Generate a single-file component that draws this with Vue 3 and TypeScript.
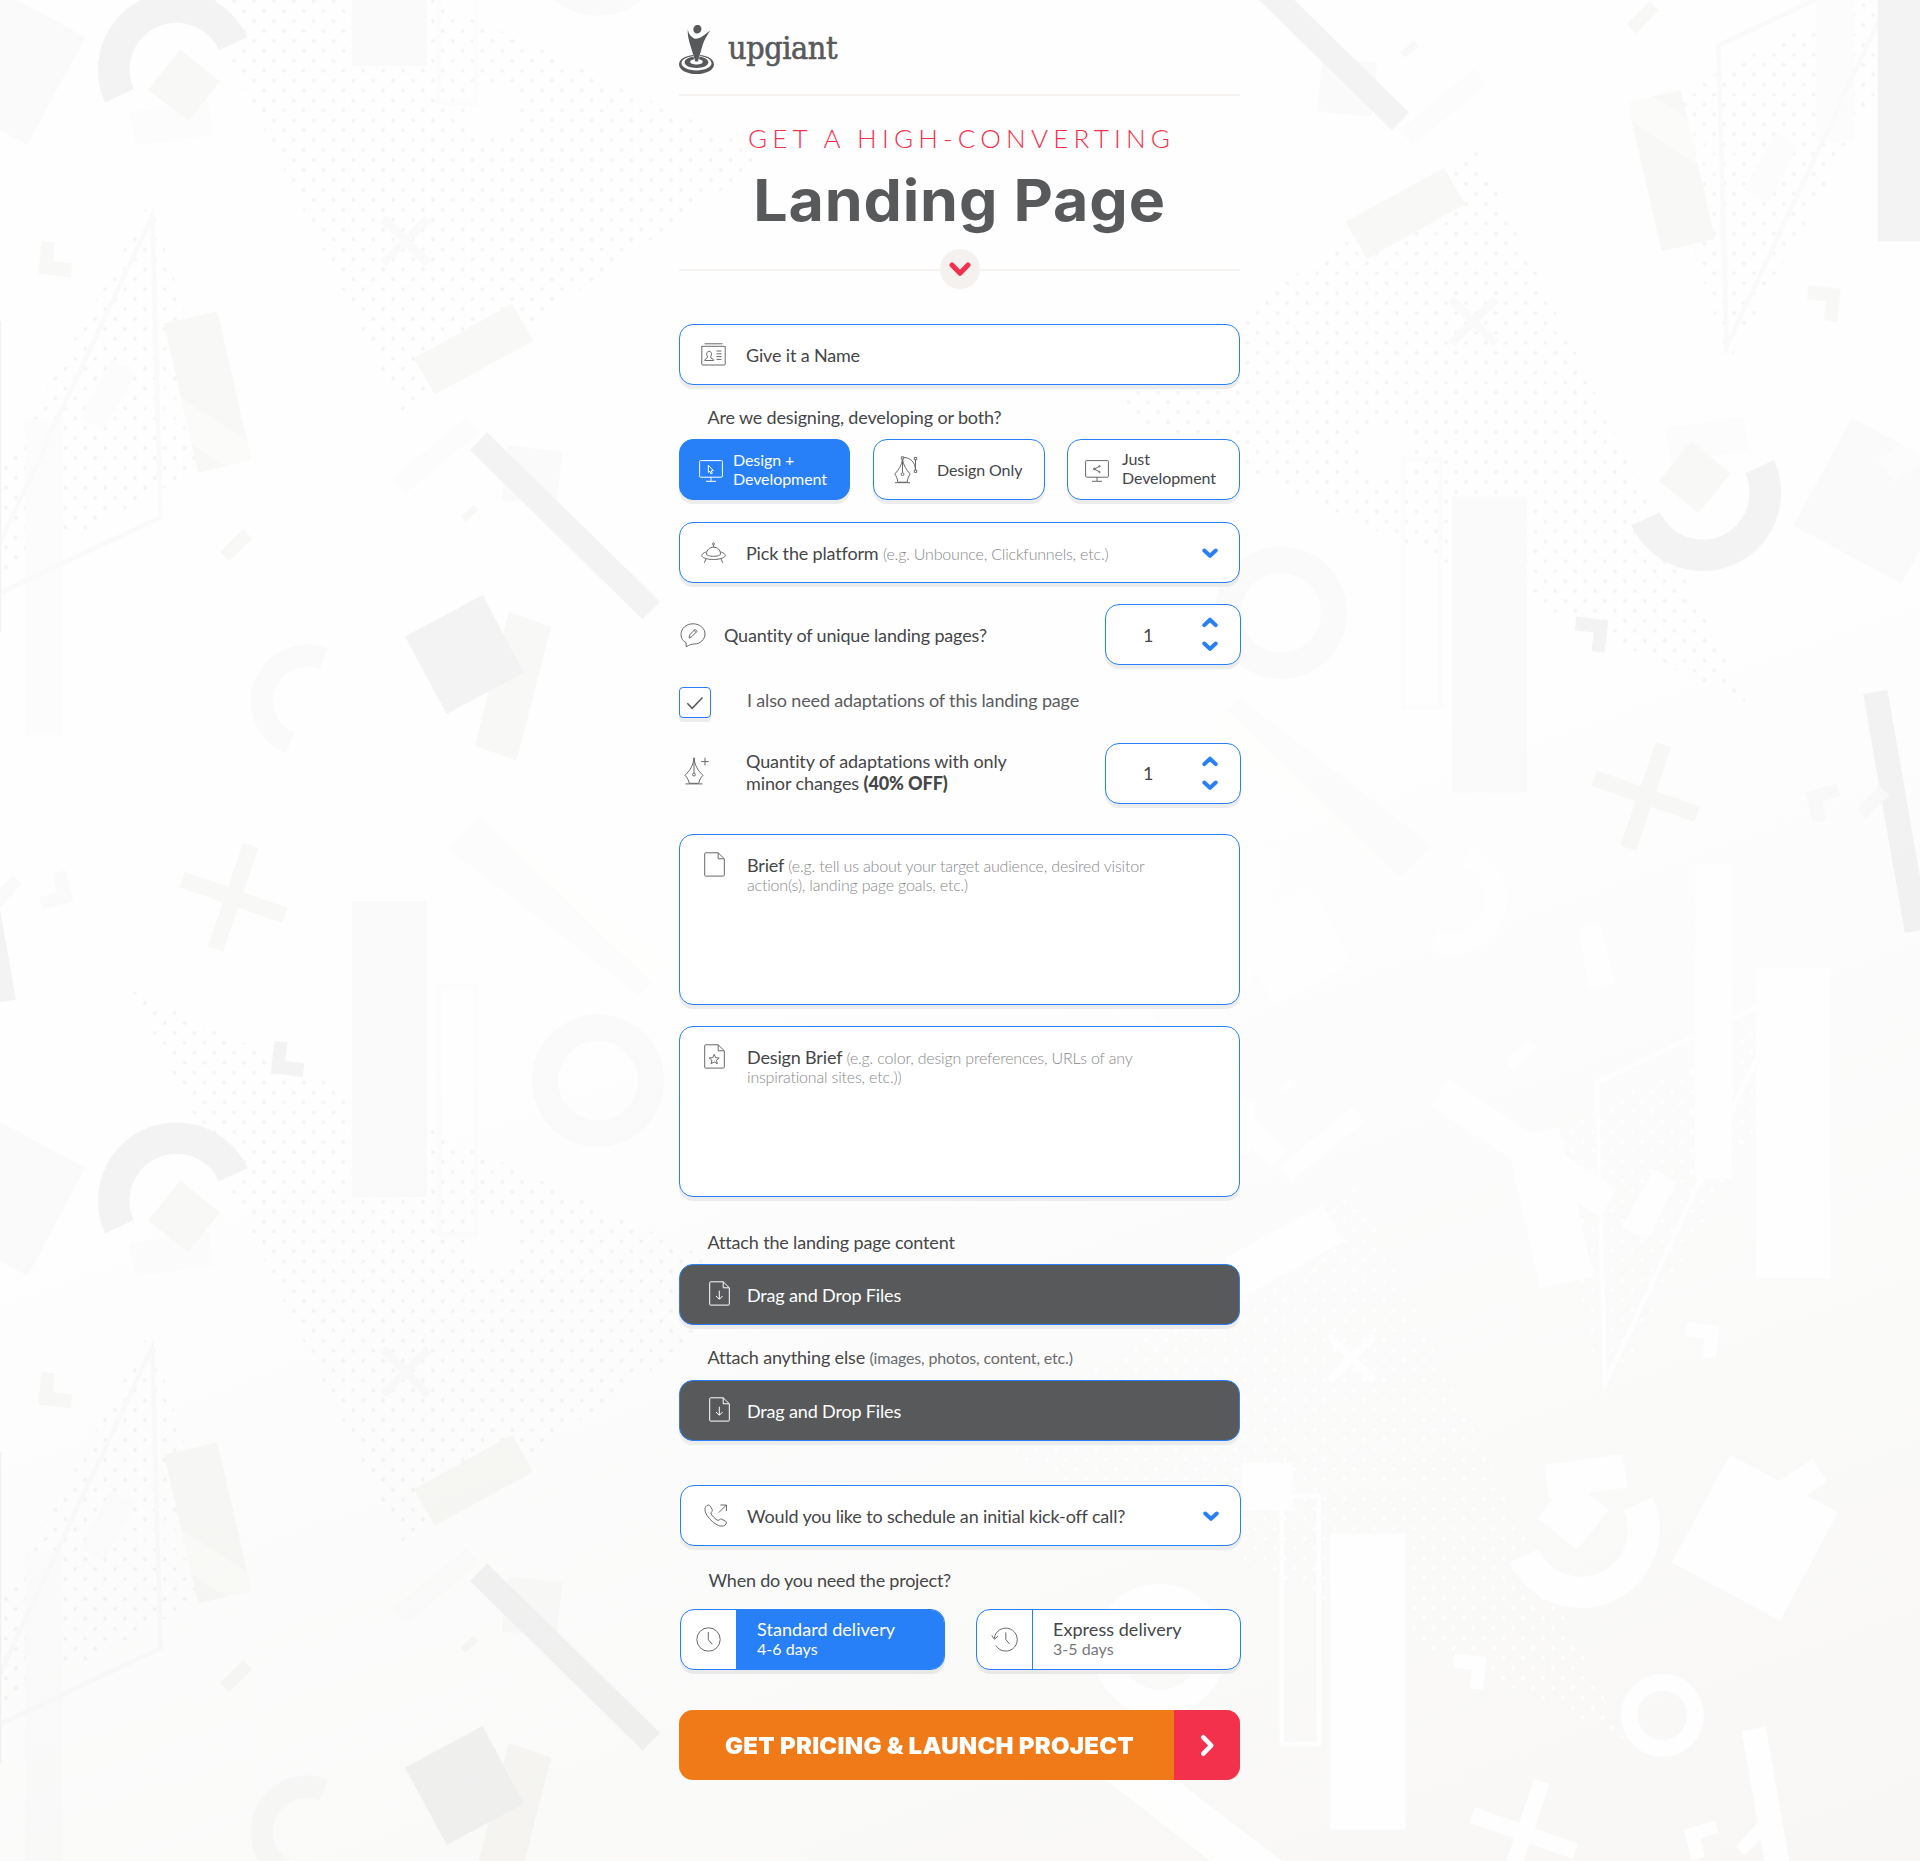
<script setup lang="ts">
import { ref } from 'vue'

type Scope = 'both' | 'design' | 'dev'
type Delivery = 'standard' | 'express'

const scope = ref<Scope>('both')
const delivery = ref<Delivery>('standard')
const pages = ref(1)
const adaptations = ref(1)
const needsAdaptations = ref(true)

const uploads = [
  { label: 'Attach the landing page content', hint: '' },
  { label: 'Attach anything else', hint: '(images, photos, content, etc.)' },
]
</script>

<template>
  <div class="page">
    <svg class="backdrop" viewBox="0 0 1920 1861" aria-hidden="true">
      <defs>
        <pattern id="dots" x="224.3" y="-8.7" width="19.86" height="19.86" patternUnits="userSpaceOnUse">
          <circle class="dot" cx="9.93" cy="9.93" r="1.9" />
          <circle class="dot" cx="0" cy="0" r="1.9" />
          <circle class="dot" cx="19.86" cy="0" r="1.9" />
          <circle class="dot" cx="0" cy="19.86" r="1.9" />
          <circle class="dot" cx="19.86" cy="19.86" r="1.9" />
        </pattern>
        <pattern id="dots-white" x="224.3" y="-8.7" width="19.86" height="19.86" patternUnits="userSpaceOnUse">
          <g fill="#fff">
            <circle cx="9.93" cy="9.93" r="1.9" />
            <circle cx="0" cy="0" r="1.9" />
            <circle cx="19.86" cy="0" r="1.9" />
            <circle cx="0" cy="19.86" r="1.9" />
            <circle cx="19.86" cy="19.86" r="1.9" />
          </g>
        </pattern>
        <linearGradient id="warm" gradientUnits="userSpaceOnUse" x1="393" y1="1081" x2="823" y2="2262">
          <stop offset="0" stop-color="#ffffff" />
          <stop offset="1" stop-color="#f9f8f7" />
        </linearGradient>
        <g id="confetti">
          <path class="halftone" d="M133-140 770 156 403 414Z" />
          <path class="halftone" d="M150 201 187 320 198 470-20 587V510Z" />
          <path class="gap" d="M465 89h50v48h-50z" />
          <path class="pale" d="M27.400 144.800-80.600 87.100-22.500-21.300 85.500 37z" />
          <path class="veil" d="M.7 103.300-14.500 80.400-70 118-55 141z" />
          <path class="dark" d="M105 102.500A78 78 0 0 1 247.600 37.200L219 50.200A46 46 0 0 0 133.700 89z" />
          <path class="faint" d="M129.700 112.300 208.200 100.800 213.400 134.400 135.300 145.500z" />
          <path class="warm" d="M180.400 49.400 219.900 81.500 188.200 121 148.300 89.400z" />
          <path class="pale" d="M352.100-230h75V66h-75z" />
          <path class="faint-line" d="M438.500-144.600h37.200V103.400h-37.200z" />
          <circle class="pale-line" cx="598" cy="-50.300" r="53" stroke-width="26.200" />
          <path class="pale-line" d="M383.300 218.700l44.500 44.600M427.800 218.700l-44.500 44.600" stroke-width="8.200" />
          <path class="warm" d="M512.100 303.700 533.400 340.800 435 394.600 413.700 358.600z" />
          <path class="faint" d="M466.600 417.600 478.800 432.200 405 493.500 392.500 477.700z" />
          <path class="warm" d="M474 505 478.800 509.700 465.300 522 460.500 516zM243.300 528.700 252.400 538.600 229.400 561.100 219.900 552z" />
          <path class="pale" d="M507.800 445.600 562.400 451.600 556.400 505 501.700 500.200z" />
          <path class="dark" d="M487 432.200 660 601.800 642.700 619.600 470 450z" />
          <path class="warm" d="M164 323.400 217.300 311.200 251.500 459.900 198.200 472.500z" />
          <path class="veil" d="M141 410 157.400 382.500 326.600 493 309 520.800z" />
          <path class="faint" d="M110.600 359.800 135.700 372.500 103.200 430.200 81 417.200z" />
          <path class="faint" d="M25.200 421h37.200v314H25.200z" />
          <path class="pale-line" d="M152.200 216 160.700 517-30 607z" stroke-width="4.600" stroke-miterlimit="20" />
          <path class="warm" d="M41.600 240.400 55 242.400 53 261 72 263.300 70.700 277.600 38.200 273.600z" />
          <path class="dark" d="M-73 321H1.300V632H-73z" />
          <path class="pale" d="M327.800 648.500A56 56 0 0 0 286.200 753.300L294.400 732.700A34 34 0 0 1 319.600 669.400z" />
          <path class="warm" d="M508.700 612 551.200 626.700 516.500 760.800 474.900 745.700z" />
          <path class="dark" d="M482.700 595.100 523.900 672.600 446.700 714.100 405 636.600z" />
          <path class="veil" d="M179 672 156.600 676.600 142.300 615.700 168 609.800z" />
          <path class="tint" d="M479.200-314.500 668.700-167 651.800-148.400z" />
          <path class="faint" d="M479.200-314.500 651.800-148.400 639.600-135.400 447.500-282.800z" />
          <path class="warm-line" d="M250.700-285.600 215.500-182M182.100-251.600 284.900-215.600" stroke-width="16.300" />
          <path class="pale" d="M65.900-260.700 73.700-229.900 42.500-221.200 39-233.400 56.800-239 52.500-257.500z" />
          <path class="dark" d="M15.800-131.500-8.400-127.200-50-366-25.800-370.400z" />
          <path class="pale" d="M.2-223-10.600-233 13-255.700 21.500-247z" />
          <path class="dark" d="M274.500-89.900 287.500-88.700 285.300-70.100 304.400-67.700 302.700-53.900 270.600-57.900z" />
          <circle class="veil-line" cx="95" cy="-115.800" r="33.100" stroke-width="16.800" />
        </g>
      </defs>
      <rect width="1920" height="1861" fill="#fefefe" />
      <use href="#confetti" />
      <use href="#confetti" transform="translate(0 1131)" />
      <use href="#confetti" transform="translate(1879 562.500) rotate(180)" />
      <rect class="shade" width="1920" height="1861" fill="url(#warm)" />
      <use class="white" href="#confetti" transform="translate(1757.400 1599.500) rotate(180)" />
    </svg>

    <main class="column">
      <header class="brand">
        <svg class="brand-mark" viewBox="0 0 35 49" width="35" height="49">
          <g fill="#58595b">
            <ellipse cx="18.400" cy="4.200" rx="4" ry="4.400" transform="rotate(12 18.400 4.200)" />
            <path d="M8.900 4C9.300 8 11 11.500 16 13.800 21 14.200 26 9.500 31.400 5.300 28 10.500 25 15.500 23.800 19.500L18.900 36.500H16.300L10.600 18C9.300 13 8.300 8 8.900 4Z" />
            <path fill-rule="evenodd" d="M14 29.900C5.800 30.800 0 34.500 0 39.400S7 49 17.500 49 35 44.300 35 39.400 29.400 30.800 21.300 29.900L20.900 31C27.500 31.800 32.500 34.500 32.500 38.300 32.500 42.300 26 45.400 17.500 45.400S2.500 42.300 2.500 38.300C2.500 34.500 7.500 31.800 14.400 31Z" />
            <path fill-rule="evenodd" d="M14.500 31.800C9.200 32.400 5.600 34.600 5.600 37.300 5.600 40.700 10.800 43 17.500 43S29.300 40.700 29.300 37.300C29.300 34.600 25.800 32.400 20.500 31.800L20 34.300C22.300 34.700 23.700 35.500 23.700 36.700 23.700 38.400 21 39.500 17.500 39.500S11.200 38.400 11.200 36.700C11.200 35.500 12.800 34.700 15.100 34.300Z" />
          </g>
        </svg>
        <span class="brand-name">upgiant</span>
      </header>

      <section class="hero">
        <p class="eyebrow">GET A HIGH-CONVERTING</p>
        <h1>Landing Page</h1>
      </section>

      <div class="divider">
        <span class="divider-badge">
          <svg width="22" height="15" viewBox="0 0 22 15"><path d="M3 3 11 11.300 19 3" fill="none" stroke="#f4314d" stroke-width="5" stroke-linecap="round" stroke-linejoin="round" /></svg>
        </span>
      </div>

      <div class="field name-field">
        <svg class="line-icon" width="25" height="23" viewBox="0 0 25 23">
          <path d="M3.500.8h18M.8 3.300h23M.8 3v18.200q0 .8.800.8h21.800q.8 0 .8-.8V3M15.500 8h5M15.500 10.800h5M15.500 13.600h5M15.500 16.400h5" />
          <path d="M3.800 17.500c0-2.300 2.800-1.700 2.800-3.600-1.500-2.300-1.200-5.600 1.500-5.600s3 3.300 1.500 5.600c0 1.900 3 1.300 3 3.600z" />
        </svg>
        <span>Give it a Name</span>
      </div>

      <p class="label">Are we designing, developing or both?</p>
      <div class="scopes">
        <button class="scope scope-both" :class="{ active: scope === 'both' }" @click="scope = 'both'">
          <svg class="line-icon" width="24" height="22" viewBox="0 0 24 22">
            <path d="M1.500.6h21q.9 0 .9.900v14.800q0 .9-.9.900h-21q-.9 0-.9-.9V1.500q0-.9.900-.9zM12 17.200v4M7 21.300h10" />
            <path d="M9.300 5.200v7.300l1.600-1.300 1 2.700 1.400-.6-1.100-2.500 2.100-.2z" />
          </svg>
          <span>Design +<br />Development</span>
        </button>
        <button class="scope scope-design" :class="{ active: scope === 'design' }" @click="scope = 'design'">
          <svg class="line-icon" width="25" height="28" viewBox="0 0 25 28">
            <path d="M7.300.8h2.400v2.400H7.300zM20.300 1.400h2.400v2.400h-2.400zM20.300 14h2.400v2.400h-2.400zM9.700 1.500c6.500 0 11.600 4.800 11.800 12.400M21.500 3.800V14M8.500 3.200v13.500" />
            <path d="M8.500 3.500C7.600 9.500 4.500 14 .8 18c1.600 2.300 2.700 5 3.100 8.200h9.200c.4-3.200 1.500-5.900 3.100-8.200C12.500 14 9.400 9.500 8.500 3.500zM1 26.700h15" />
            <circle cx="8.500" cy="18.200" r="1.400" />
          </svg>
          <span>Design Only</span>
        </button>
        <button class="scope scope-dev" :class="{ active: scope === 'dev' }" @click="scope = 'dev'">
          <svg class="line-icon" width="24" height="22" viewBox="0 0 24 22">
            <path d="M1.500.6h21q.9 0 .9.900v14.800q0 .9-.9.900h-21q-.9 0-.9-.9V1.500q0-.9.900-.9zM12 17.200v4M7 21.300h10M14.500 6.300 9.300 9l5.200 2.900" />
            <circle cx="14.500" cy="6.200" r=".7" /><circle cx="9.300" cy="9" r=".9" /><circle cx="14.500" cy="12" r=".7" />
          </svg>
          <span>Just<br />Development</span>
        </button>
      </div>

      <div class="field platform-field">
        <svg class="line-icon" width="25" height="22" viewBox="0 0 25 22">
          <circle cx="12.500" cy="1.900" r="1" />
          <path d="M12.500 3v2.200M5.500 12C5.500 8 8.500 5.200 12.500 5.200S19.500 8 19.500 12c0 1.200-3 2.300-7 2.300S5.500 13.200 5.500 12zM5.600 9.800C2.500 10.700.8 12 .8 13.400c0 2.300 5.200 4.100 11.700 4.100s11.700-1.800 11.700-4.100c0-1.400-1.700-2.700-4.800-3.600M5 16.800l-1.700 4M20 16.800l1.700 4" />
        </svg>
        <span class="grow">Pick the platform <em>(e.g. Unbounce, Clickfunnels, etc.)</em></span>
        <svg class="chevron" width="16" height="11" viewBox="0 0 16 11"><path d="M2.300 2.500 8 7.900 13.700 2.500" /></svg>
      </div>

      <div class="row row-pages">
        <svg class="line-icon" width="26" height="25" viewBox="0 0 26 25">
          <path d="M6.200 23.800V19.800C3 18.200 1 15.200 1 11.500 1 5.500 6 .8 13 .8s12 4.700 12 10.200-5 10-10.500 10c-2.800 0-5 .8-8.300 2.800z" />
          <path d="M9 15l1-3.500 5-5.200 2 2-5 5.200zM14 7.300l2 2" />
        </svg>
        <span class="grow">Quantity of unique landing pages?</span>
        <div class="stepper">
          <output>{{ pages }}</output>
          <div class="steps">
            <svg class="chevron" width="16" height="11" viewBox="0 0 16 11" @click="pages++"><path d="M2.300 8.100 8 2.700 13.700 8.100" /></svg>
            <svg class="chevron" width="16" height="11" viewBox="0 0 16 11" @click="pages = Math.max(1, pages - 1)"><path d="M2.300 2.500 8 7.900 13.700 2.500" /></svg>
          </div>
        </div>
      </div>

      <div class="check-row" @click="needsAdaptations = !needsAdaptations">
        <span class="checkbox">
          <svg v-if="needsAdaptations" width="18" height="14" viewBox="0 0 18 14"><path d="M1.300 7.300 6.200 12.300 16.500 1.500" fill="none" stroke="#58595b" stroke-width="1.500" /></svg>
        </span>
        <span>I also need adaptations of this landing page</span>
      </div>

      <div class="row row-adapt">
        <svg class="line-icon" width="26" height="28" viewBox="0 0 26 28">
          <path d="M10 .5v15.700M10 1C9.300 8.500 6 13.500 1 18.300c2 2 3.700 4.600 4.200 8h9.600c.5-3.400 2.200-6 4.200-8C14 13.500 10.700 8.500 10 1zM1.500 26.900h17M21 .8v7.600M17.200 4.600h7.600" />
          <circle cx="10" cy="17.600" r="1.400" />
        </svg>
        <span class="grow">Quantity of adaptations with only<br />minor changes <b>(40% OFF)</b></span>
        <div class="stepper">
          <output>{{ adaptations }}</output>
          <div class="steps">
            <svg class="chevron" width="16" height="11" viewBox="0 0 16 11" @click="adaptations++"><path d="M2.300 8.100 8 2.700 13.700 8.100" /></svg>
            <svg class="chevron" width="16" height="11" viewBox="0 0 16 11" @click="adaptations = Math.max(1, adaptations - 1)"><path d="M2.300 2.500 8 7.900 13.700 2.500" /></svg>
          </div>
        </div>
      </div>

      <div class="field area brief">
        <svg class="line-icon" width="21" height="25" viewBox="0 0 21 25">
          <path d="M14.200.8H1.500q-.8 0-.8.800v21.700q0 .8.800.8h18q.8 0 .8-.8V6.800zM14.200.8v6h6" />
        </svg>
        <p>Brief <em>(e.g. tell us about your target audience, desired visitor<br />action(s), landing page goals, etc.)</em></p>
      </div>

      <div class="field area">
        <svg class="line-icon" width="21" height="25" viewBox="0 0 21 25">
          <path d="M14.200.8H1.500q-.8 0-.8.800v21.700q0 .8.800.8h18q.8 0 .8-.8V6.800zM14.200.8v6h6" />
          <path d="M10.200 10.400l1.400 3.300 3.600.3-2.700 2.300.8 3.500-3.100-1.900-3.100 1.900.8-3.500-2.700-2.300 3.600-.3z" />
        </svg>
        <p>Design Brief <em>(e.g. color, design preferences, URLs of any<br />inspirational sites, etc.))</em></p>
      </div>

      <div class="uploads">
        <template v-for="upload in uploads" :key="upload.label">
          <p class="label">{{ upload.label }} <small v-if="upload.hint">{{ upload.hint }}</small></p>
          <div class="field drop">
            <svg class="line-icon" width="21" height="25" viewBox="0 0 21 25">
              <path d="M14.200.8H1.500q-.8 0-.8.800v21.700q0 .8.800.8h18q.8 0 .8-.8V6.800zM14.200.8v6h6M10.300 9.700v8.300M7 15l3.300 3.300 3.300-3.300" />
            </svg>
            <span>Drag and Drop Files</span>
          </div>
        </template>
      </div>

      <div class="closing">
        <div class="field call-field">
          <svg class="line-icon" width="24" height="23" viewBox="0 0 24 23">
            <path d="M1.800 2.600C3 .8 5.300.5 6.300 2.200L8.200 5.600C8.900 7 7.200 8 7 9.200 6.900 10.800 12 16 14 16.300c1.300.1 2.200-1.700 3.500-1.200l4 2c1.500.9 1 2.700-.4 3.900C18.800 22.800 15.500 22.300 12 20.200 7.500 17.500 3 12.500 1.400 8.200.8 6 .8 4 1.800 2.600zM14.800 8.600 22.400 1M16.400 1h6v6" />
          </svg>
          <span class="grow">Would you like to schedule an initial kick-off call?</span>
          <svg class="chevron" width="16" height="11" viewBox="0 0 16 11"><path d="M2.300 2.500 8 7.900 13.700 2.500" /></svg>
        </div>

        <p class="label">When do you need the project?</p>
        <div class="deliveries">
          <button class="delivery" :class="{ active: delivery === 'standard' }" @click="delivery = 'standard'">
            <span class="delivery-icon">
              <svg class="line-icon" width="25" height="25" viewBox="0 0 25 25"><circle cx="12.500" cy="12.500" r="11.700" /><path d="M12.300 5v7.700l4 4.600" /></svg>
            </span>
            <span class="delivery-text">Standard delivery<small>4-6 days</small></span>
          </button>
          <button class="delivery" :class="{ active: delivery === 'express' }" @click="delivery = 'express'">
            <span class="delivery-icon">
              <svg class="line-icon" width="27" height="25" viewBox="0 0 27 25"><path d="M3.300 11.500A11.500 11.500 0 1 1 5 18.700M.8 8.500l2.500 3.700L7 9.300M14.800 5.500v7l3.800 4.500" /></svg>
            </span>
            <span class="delivery-text">Express delivery<small>3-5 days</small></span>
          </button>
        </div>
      </div>

      <button class="cta">
        <span class="cta-text">GET PRICING &amp; LAUNCH PROJECT</span>
        <span class="cta-arrow">
          <svg width="15" height="23" viewBox="0 0 15 23"><path d="M3.300 3.300 11.300 11.500 3.300 19.700" fill="none" stroke="#fff" stroke-width="4.600" stroke-linecap="round" stroke-linejoin="round" /></svg>
        </span>
      </button>
    </main>
  </div>
</template>

<style>
body {
  margin: 0;
}
</style>

<style scoped>
.page {
  position: relative;
  width: 1920px;
  height: 1861px;
  overflow: hidden;
  font-family: Lato, 'Open Sans', sans-serif;
  font-size: 18px;
  letter-spacing: -0.16px;
  color: #454648;
  --dark: #f3f3f3;
  --warm: #f8f8f6;
  --pale: #fafafa;
  --faint: #fcfcfc;
  --veil: rgba(255, 255, 255, 0.4);
  --halftone: url(#dots);
}

.backdrop {
  position: absolute;
  inset: 0;
  width: 1920px;
  height: 1861px;
  isolation: isolate;
}
.white {
  --dark: #fefefe;
  --warm: #fefefe;
  --pale: #fefefe;
  --faint: #fefefe;
  --veil: #fefefe;
  --halftone: url(#dots-white);
}
.dot { fill: #f4f4f4; }
.halftone { fill: var(--halftone); }
.gap { fill: #fefefe; }
.dark { fill: var(--dark); }
.warm { fill: var(--warm); }
.pale { fill: var(--pale); }
.faint { fill: var(--faint); }
.veil { fill: var(--veil); }
.tint { fill: #fefefc; }
.faint-line { fill: none; stroke: var(--faint); stroke-width: 4.5; }
.pale-line { fill: none; stroke: var(--pale); }
.warm-line { fill: none; stroke: var(--warm); }
.veil-line { fill: none; stroke: var(--veil); }
.shade { mix-blend-mode: multiply; }

p, h1 { margin: 0; }
em {
  font-style: normal;
  font-weight: 300;
  font-size: 16px;
  letter-spacing: -0.18px;
  color: #88898b;
}
button {
  font: inherit;
  letter-spacing: inherit;
  color: inherit;
  text-align: left;
  padding: 0;
  cursor: pointer;
}
.grow { flex: 1; }

.column {
  position: relative;
  display: flex;
  flex-direction: column;
  width: 561px;
  margin-left: 679px;
}

.brand {
  display: flex;
  align-items: flex-start;
  height: 96px;
  box-sizing: border-box;
  padding-top: 25px;
  border-bottom: 2px solid #f5f2ef;
}
.brand-name {
  margin: 5px 0 0 14px;
  font: 32px/37px 'DejaVu Serif Condensed', 'DejaVu Serif', serif;
  font-stretch: condensed;
  letter-spacing: -0.4px;
  color: #58595b;
  -webkit-text-stroke: 0.6px #58595b;
}

.hero { text-align: center; height: 173px; }
.eyebrow {
  padding: 26px 0 0 4px;
  font-size: 26px;
  font-weight: 300;
  line-height: 32px;
  letter-spacing: 5.2px;
  color: #f4314d;
  white-space: nowrap;
}
h1 {
  margin-top: 10px;
  font: 700 57.5px/72px Inter, sans-serif;
  letter-spacing: 0.8px;
  color: #58595b;
  white-space: nowrap;
  transform: scaleX(1.06);
}

.divider {
  display: flex;
  align-items: center;
  justify-content: center;
  height: 2px;
  background: #f5f2ef;
}
.divider-badge {
  display: flex;
  align-items: center;
  justify-content: center;
  width: 40px;
  height: 40px;
  margin-top: -2px;
  border-radius: 50%;
  background: #f5f1ef;
}

.field {
  display: flex;
  align-items: center;
  box-sizing: border-box;
  height: 61px;
  padding: 0 22px;
  border: 1px solid #2780f8;
  border-radius: 14px;
  background: #fff;
  box-shadow: 0 4px 0 #ececed;
}
.name-field { margin-top: 53px; }
.name-field .line-icon,
.platform-field .line-icon { margin: 0 20px 0 -1px; }
.platform-field { margin-top: 22px; }
.platform-field .chevron,
.call-field .chevron { margin: 1px -1px 0 0; }

.line-icon {
  flex: none;
  fill: none;
  stroke: #68696b;
  stroke-width: 1;
  stroke-linejoin: round;
}
.chevron {
  flex: none;
  fill: none;
  stroke: #2780f8;
  stroke-width: 4;
  stroke-linecap: round;
  stroke-linejoin: round;
}

.label {
  margin: 20px 0 10px;
  padding-left: 28.5px;
  line-height: 24px;
}
.label small { font-size: 16px; color: #6b6c6e; }

.scopes { display: flex; }
.scope {
  display: flex;
  align-items: center;
  box-sizing: border-box;
  height: 61px;
  border: 1px solid #2780f8;
  border-radius: 14px;
  background: #fff;
  box-shadow: 0 4px 0 #ececed;
  font-size: 16px;
  line-height: 19px;
  letter-spacing: -0.08px;
}
.scope-both { width: 171px; margin-right: 23px; padding-left: 19px; }
.scope-both span { margin: -2px 0 0 10px; }
.scope-both .line-icon { margin-top: 3px; }
.scope-design { width: 172px; margin-right: 22px; padding-left: 20px; }
.scope-design span { margin-left: 18px; }
.scope-dev { width: 173px; padding-left: 17px; }
.scope-dev span { margin: -4px 0 0 13px; }
.scope-dev .line-icon { margin-top: 3px; }
.active.scope { background: #2780f8; color: #fff; }
.active.scope .line-icon { stroke: #fff; }

.row { display: flex; align-items: center; height: 61px; }
.row-pages { margin-top: 21px; }
.row-pages > .line-icon { margin: 2px 18px 0 1px; }
.stepper {
  display: flex;
  align-items: center;
  justify-content: space-between;
  box-sizing: border-box;
  width: 136px;
  height: 61px;
  margin-right: -1px;
  padding: 0 22px 0 37px;
  border: 1px solid #2780f8;
  border-radius: 14px;
  background: #fff;
  box-shadow: 0 4px 0 #ececed;
}
.steps { display: flex; flex-direction: column; gap: 13px; }

.check-row {
  display: flex;
  align-items: center;
  height: 31px;
  margin-top: 22px;
  color: #5b5c5e;
}
.check-row > span:last-child { margin: -5px 0 0 36px; }
.checkbox {
  display: flex;
  align-items: center;
  justify-content: center;
  box-sizing: border-box;
  width: 32px;
  height: 31px;
  border: 1px solid #2780f8;
  border-radius: 4px;
  background: #fff;
  box-shadow: 0 4px 0 #ececed;
}

.row-adapt { margin-top: 25px; line-height: 21.6px; }
.row-adapt > .line-icon { margin: -6px 36px 0 5px; }
.row-adapt > .grow { margin-top: -1px; letter-spacing: -0.1px; }
.row-adapt b { font-weight: 900; }

.area { height: 171px; align-items: flex-start; padding: 17px 24px; margin-top: 21px; }
.area.brief { margin-top: 30px; }
.area p { margin: 4px 0 0 22px; line-height: 19px; white-space: nowrap; }

.uploads { padding-top: 13px; }
.uploads .label { margin-top: 20px; }
.drop { background: #58595b; color: #fff; padding-left: 29px; }
.drop .line-icon { stroke: #fff; margin: -2px 17px 0 0; }

.closing { margin: 44px -1px 0 1px; }
.call-field { padding-left: 24px; }
.call-field .line-icon { margin: 0 19px 0 -1px; }
.closing .label { margin: 22px 0 17px; letter-spacing: -0.22px; }
.deliveries { display: flex; justify-content: space-between; }
.delivery {
  display: flex;
  box-sizing: border-box;
  width: 265px;
  height: 61px;
  border: 1px solid #2780f8;
  border-radius: 14px;
  background: #fff;
  box-shadow: 0 4px 0 #e9e9e9;
  overflow: hidden;
}
.delivery-icon {
  display: flex;
  align-items: center;
  justify-content: center;
  width: 55px;
  border-right: 1px solid #2780f8;
}
.delivery-text {
  flex: 1;
  padding: 8px 0 0 20px;
  line-height: 22px;
  letter-spacing: 0.05px;
}
.delivery-text small { display: block; font-size: 16px; line-height: 17px; color: #77787a; }
.active .delivery-text { background: #2780f8; color: #fff; }
.active .delivery-text small { color: #fff; }

.cta {
  display: flex;
  height: 70px;
  margin-top: 40px;
  border: 0;
  border-radius: 14px;
  overflow: hidden;
  background: #f17a18;
  color: #fff;
}
.cta-text {
  flex: 1;
  padding-left: 46px;
  font: 900 23px/73px Inter, sans-serif;
  letter-spacing: 0.25px;
  white-space: nowrap;
  transform: scaleX(1.04);
  transform-origin: 46px 50%;
}
.cta-arrow {
  display: flex;
  align-items: center;
  justify-content: center;
  width: 66px;
  padding-left: 1px;
  box-sizing: border-box;
  background: #f4314d;
}
</style>
